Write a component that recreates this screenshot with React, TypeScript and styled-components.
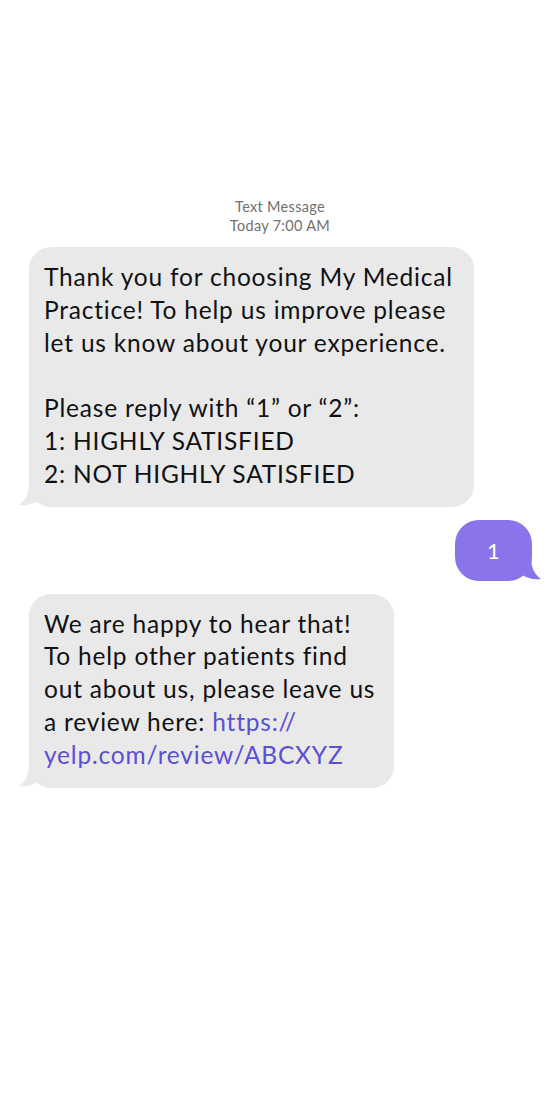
import styled, { createGlobalStyle } from "styled-components";

const GRAY = "#e9e9ea";
const PURPLE = "#8b74e9";

const GlobalStyle = createGlobalStyle`
  body {
    margin: 0;
    background: #fff;
    font-family: Lato, "Open Sans", sans-serif;
  }
`;

interface BubbleProps {
  $width: number;
  $mine?: boolean;
}

const Tail = ({ mine }: { mine?: boolean }) => (
  <TailSvg $mine={mine} width="28" height="24" viewBox="0 0 28 24">
    <path
      d="M10 0 C10 10 7 17 0 22 C8 23 15 21 20 17 L28 24 L28 0 Z"
      fill={mine ? PURPLE : GRAY}
    />
  </TailSvg>
);

const App = () => {
  return (
    <Page>
      <GlobalStyle />
      <Meta>
        Text Message
        <br />
        Today 7:00 AM
      </Meta>
      <Thread>
        <Bubble $width={445}>
          <Text>
            Thank you for choosing My Medical
            <br />
            Practice! To help us improve please
            <br />
            let us know about your experience.
            <br />
            <br />
            Please reply with “1” or “2”:
            <br />
            1: HIGHLY SATISFIED
            <br />
            2: NOT HIGHLY SATISFIED
          </Text>
          <Tail />
        </Bubble>
        <Bubble $width={77} $mine>
          <Reply>1</Reply>
          <Tail mine />
        </Bubble>
        <Bubble $width={365}>
          <Text>
            We are happy to hear that!
            <br />
            To help other patients find
            <br />
            out about us, please leave us
            <br />
            a review here: <Link>https://</Link>
            <br />
            <Link>yelp.com/review/ABCXYZ</Link>
          </Text>
          <Tail />
        </Bubble>
      </Thread>
    </Page>
  );
};

const Page = styled.div`
  width: 560px;
  min-height: 1120px;
  padding-top: 197px;
  box-sizing: border-box;
`;
const Meta = styled.div`
  text-align: center;
  font-size: 14.5px;
  letter-spacing: 0.3px;
  line-height: 19px;
  color: #707070;
  margin-bottom: 12px;
`;
const Thread = styled.div`
  display: flex;
  flex-direction: column;
  gap: 13px;
  padding: 0 28px 0 29px;
`;
const Bubble = styled.div<BubbleProps>`
  position: relative;
  width: ${(p) => p.$width}px;
  box-sizing: border-box;
  align-self: ${(p) => (p.$mine ? "flex-end" : "flex-start")};
  background: ${(p) => (p.$mine ? PURPLE : GRAY)};
  border-radius: ${(p) => (p.$mine ? 24 : 22)}px;
  padding: ${(p) => (p.$mine ? "0" : "14px 15px 16px")};
`;
const TailSvg = styled.svg<{ $mine?: boolean }>`
  position: absolute;
  bottom: 0;
  ${(p) => (p.$mine ? "right: -9px; transform: scaleX(-1);" : "left: -10px;")}
`;
const Text = styled.div`
  position: relative;
  z-index: 1;
  font-size: 24.5px;
  letter-spacing: 0.8px;
  line-height: 32.8px;
  color: #111;
  white-space: nowrap;
`;
const Reply = styled.div`
  position: relative;
  z-index: 1;
  height: 61px;
  display: flex;
  align-items: center;
  justify-content: center;
  color: #fff;
  font-size: 22px;
`;
const Link = styled.span`
  color: #5a4fd6;
`;

export default App;
